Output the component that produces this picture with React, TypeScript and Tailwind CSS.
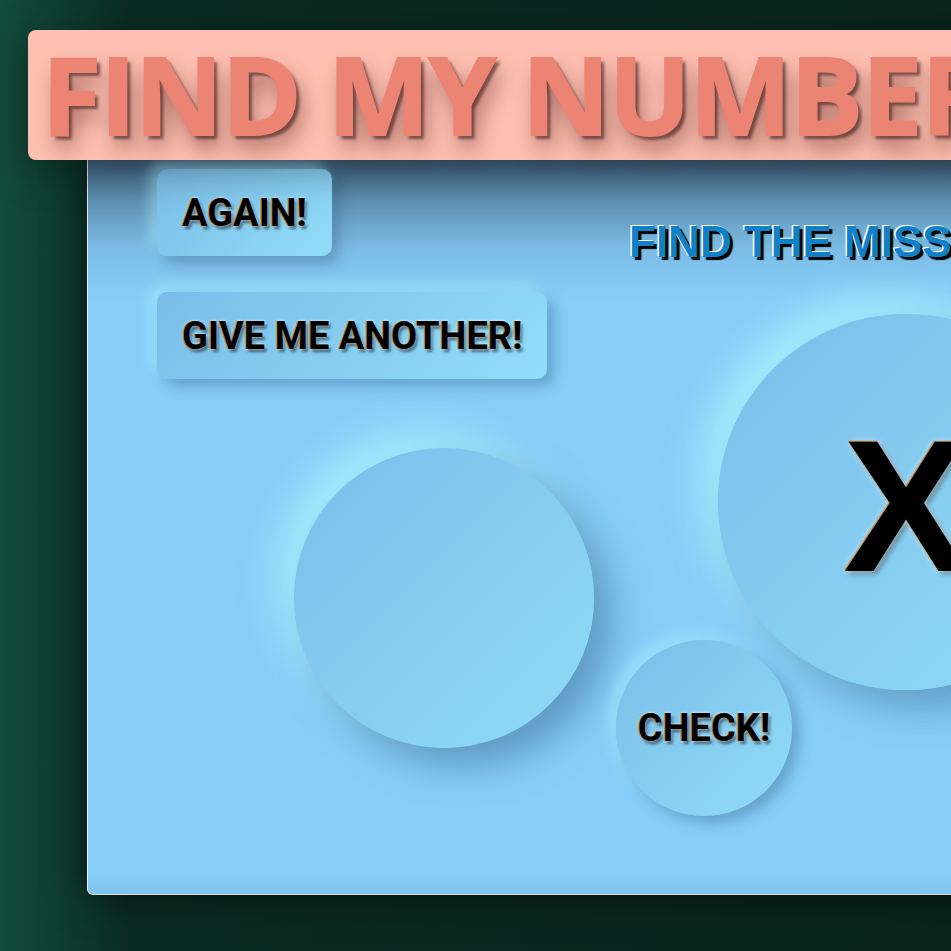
import React from "react";

const btnText =
  "font-['Roboto',sans-serif] font-bold text-[38px] text-black leading-none [text-shadow:-1px_0_0_rgba(200,120,40,0.8),0_0_3px_rgba(255,255,255,0.9),2px_3px_3px_rgba(0,0,0,0.55)]";

const raised =
  "bg-[linear-gradient(135deg,#7bbde8,#90ddf9)] shadow-[7px_7px_14px_rgba(40,80,120,0.35),-7px_-7px_14px_rgba(170,240,255,0.55)]";

export default function App() {
  return (
    <div className="w-screen h-screen overflow-hidden bg-[linear-gradient(to_right,#124c3c_0px,#0f3f31_55px,#0a2b21_130px,#08241b_100%)]">
      <header className="relative z-10 ml-[28px] mt-[30px] h-[130px] w-[1100px] shrink-0 rounded-[8px] bg-[#fec0b3] pl-[14px] pt-[10px] shadow-[0_10px_40px_rgba(0,0,0,0.35)]">
        <h1 className="whitespace-nowrap font-['Open_Sans',sans-serif] text-[108px] font-bold leading-none tracking-[-1px] text-[#eb8473] [-webkit-text-stroke:2px_#eb8473] [text-shadow:4px_4px_3px_rgba(60,25,25,0.6),6px_14px_22px_rgba(100,40,30,0.55)]">
          FIND MY NUMBER!
        </h1>
      </header>

      <main className="ml-[87px] flex h-[735px] w-[1100px] gap-[22px] rounded-bl-[6px] border border-t-0 border-white/80 bg-[linear-gradient(to_bottom,#3d5e79_0px,#5f90b2_40px,#7cbde6_90px,#87cefa_140px,#87cefa_calc(100%-22px),#7fc3ee_100%)] pl-[69px] pt-[9px] shadow-[0_0_40px_rgba(0,0,0,0.6)]">
        <section className="flex w-[437px] shrink-0 flex-col items-start">
          <button className={`flex h-[87px] items-center justify-center rounded-[10px] px-[25px] ${raised}`}>
            <span className={btnText}>AGAIN!</span>
          </button>
          <button className={`mt-[36px] flex h-[87px] items-center justify-center rounded-[10px] px-[25px] ${raised}`}>
            <span className={`${btnText} whitespace-nowrap`}>GIVE ME ANOTHER!</span>
          </button>
          <div className="ml-[137px] mt-[69px] h-[300px] w-[300px] shrink-0 rounded-full bg-[linear-gradient(135deg,#7bbde9,#8fdcf8)] shadow-[18px_18px_36px_rgba(60,110,150,0.55),-18px_-18px_36px_rgba(168,238,252,0.9)]" />
        </section>

        <section className="flex shrink-0 flex-col items-start">
          <h2 className="ml-[13px] mt-[51px] whitespace-nowrap font-['Liberation_Sans',Arial,sans-serif] text-[44px] font-bold leading-[44px] text-[#1080c8] [text-shadow:-1.5px_-1.5px_0_#fff,3px_3px_1px_#000]">
            FIND THE MISSING NUMBER!
          </h2>
          <div className="ml-[102px] mt-[50px] flex h-[376px] w-[376px] shrink-0 items-center justify-center rounded-full bg-[linear-gradient(135deg,#7bbde9,#8fdcf8)] pt-[8px] shadow-[18px_18px_36px_rgba(60,110,150,0.5),-18px_-18px_36px_rgba(168,238,252,0.95)]">
            <span className="font-['Liberation_Sans',Arial,sans-serif] text-[188px] font-bold leading-none text-black [text-shadow:-1px_-1px_1px_rgba(200,120,40,0.8),0_0_6px_rgba(255,255,255,0.8),3px_3px_5px_rgba(0,0,0,0.45)]">
              X
            </span>
          </div>
          <button className={`-mt-[50px] flex h-[176px] w-[176px] shrink-0 items-center justify-center rounded-full ${raised}`}>
            <span className={btnText}>CHECK!</span>
          </button>
        </section>
      </main>
    </div>
  );
}
